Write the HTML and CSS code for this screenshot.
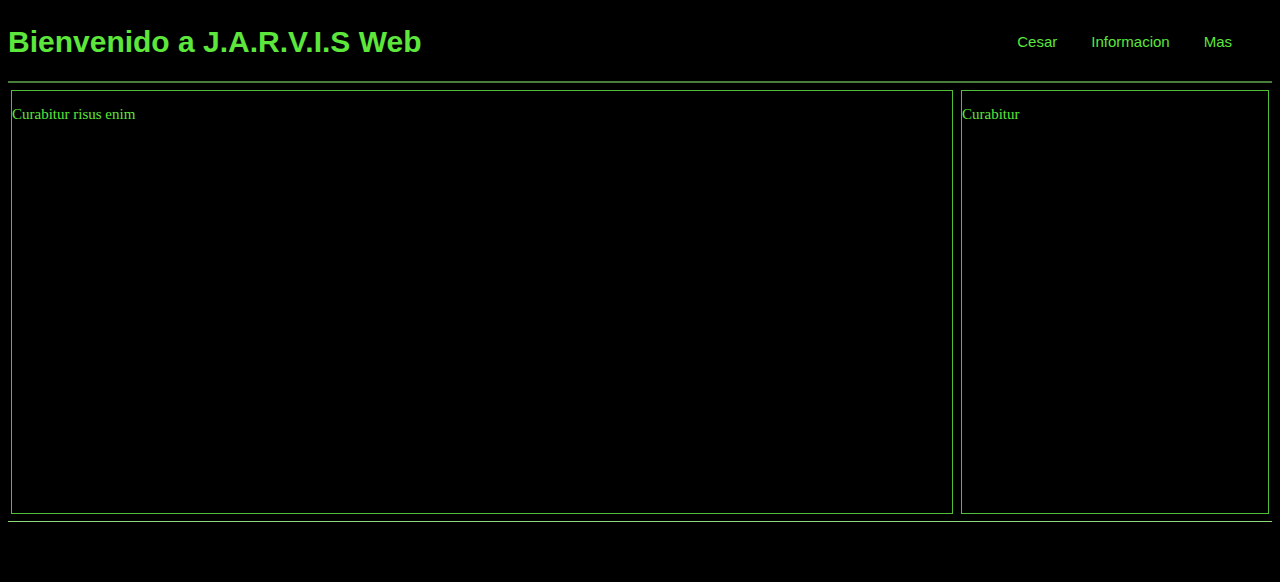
FILE: index.html
```html
<!DOCTYPE html>
<html lang="es">
<head>
    <meta charset="UTF-8">
    <meta name="viewport" content="width=device-width, initial-scale=1.0">
    <title>J.A.R.V.I.S Web</title>
    <link rel="stylesheet" href="styles.css">
</head>
<body>
<header class="header">
    <h1 class="title">Bienvenido a J.A.R.V.I.S Web</h1>
    <nav class="nav">
        <a href="#">Cesar</a>
        <a href="#">Informacion</a>
        <a href="#">Mas</a>
    </nav>
</header>

<hr class="divider">

<main class="content">
    <section class="panel panel-main">
        <p>Curabitur risus enim</p>
    </section>
    <aside class="panel panel-side">
        <p>Curabitur</p>
    </aside>
</main>

<footer class="footer"></footer>
</body>
</html>
```

FILE: styles.css
```css
:root {
    --green: #5de63b;
    --border-green: #4fbf38;
    --line-dark: #4a7d3b;
    --line-light: #8fd97a;
}

body {
    margin: 8px;
    background: #000;
    color: var(--green);
}

.header {
    display: flex;
    justify-content: space-between;
    align-items: center;
    padding: 17px 0 22px;
}

.title {
    margin: 0;
    font-family: "Liberation Sans", Arial, sans-serif;
    font-size: 30px;
    line-height: 34px;
    font-weight: 700;
}

.nav {
    display: flex;
    gap: 34px;
    padding: 0 40px 2px 0;
    font-family: "Liberation Sans", Arial, sans-serif;
    font-size: 15px;
}

.nav a {
    color: var(--green);
    text-decoration: none;
}

.divider {
    margin: 0;
    height: 2px;
    border: none;
    background: var(--line-dark);
}

.content {
    display: flex;
    gap: 8px;
    padding: 7px 3px;
}

.panel {
    height: 422px;
    border: 1px solid var(--border-green);
    font-family: "Liberation Serif", "Times New Roman", serif;
    font-size: 15px;
}

.panel p {
    margin: 15px 0 0;
}

.panel-main {
    width: 940px;
}

.panel-side {
    flex: 1;
}

.footer {
    height: 1px;
    background: var(--line-light);
}
```
